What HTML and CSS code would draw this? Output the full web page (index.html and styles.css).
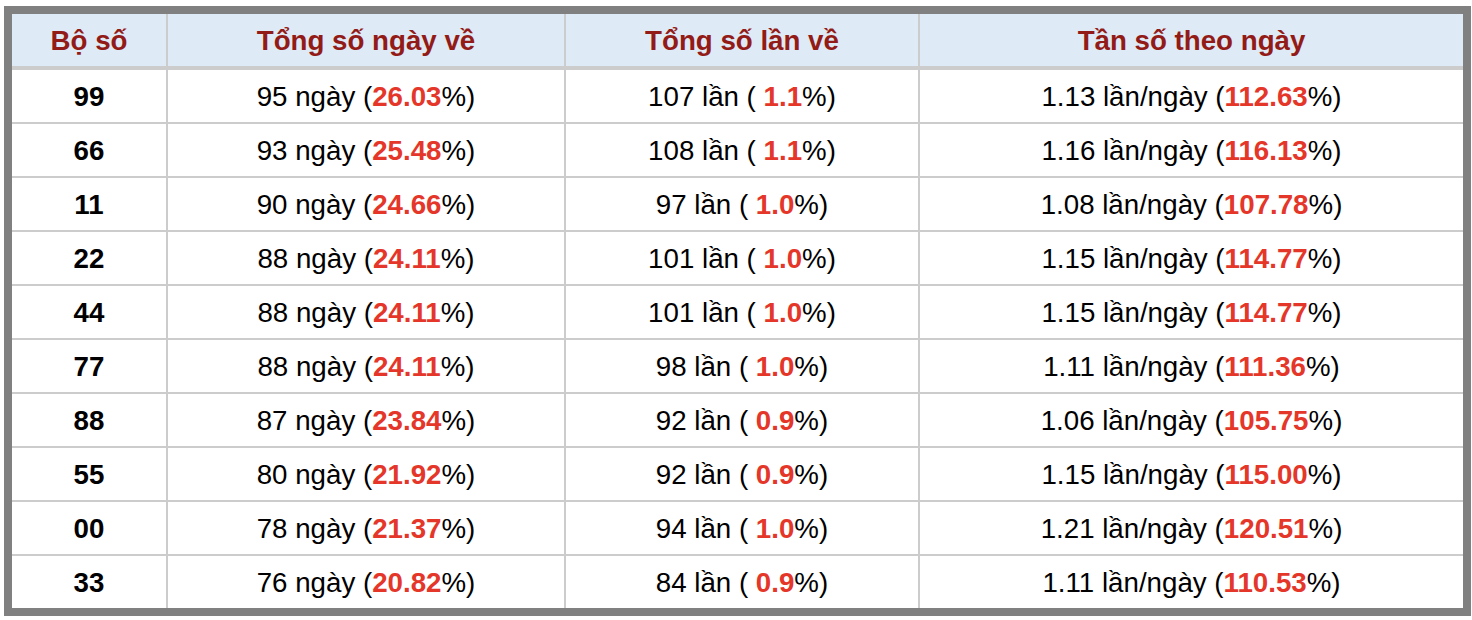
FILE: index.html
```html
<!DOCTYPE html>
<html lang="vi">
<head>
<meta charset="utf-8">
<title>Thống kê bộ số</title>
<link rel="stylesheet" href="styles.css">
</head>
<body>
<div class="frame">
<table class="stats">
<colgroup>
<col class="c1"><col class="c2"><col class="c3"><col class="c4">
</colgroup>
<thead>
<tr><th>Bộ số</th><th>Tổng số ngày về</th><th>Tổng số lần về</th><th>Tần số theo ngày</th></tr>
</thead>
<tbody>
<tr><td class="num">99</td><td>95 ngày (<b class="hl">26.03</b>%)</td><td>107 lần ( <b class="hl">1.1</b>%)</td><td>1.13 lần/ngày (<b class="hl">112.63</b>%)</td></tr>
<tr><td class="num">66</td><td>93 ngày (<b class="hl">25.48</b>%)</td><td>108 lần ( <b class="hl">1.1</b>%)</td><td>1.16 lần/ngày (<b class="hl">116.13</b>%)</td></tr>
<tr><td class="num">11</td><td>90 ngày (<b class="hl">24.66</b>%)</td><td>97 lần ( <b class="hl">1.0</b>%)</td><td>1.08 lần/ngày (<b class="hl">107.78</b>%)</td></tr>
<tr><td class="num">22</td><td>88 ngày (<b class="hl">24.11</b>%)</td><td>101 lần ( <b class="hl">1.0</b>%)</td><td>1.15 lần/ngày (<b class="hl">114.77</b>%)</td></tr>
<tr><td class="num">44</td><td>88 ngày (<b class="hl">24.11</b>%)</td><td>101 lần ( <b class="hl">1.0</b>%)</td><td>1.15 lần/ngày (<b class="hl">114.77</b>%)</td></tr>
<tr><td class="num">77</td><td>88 ngày (<b class="hl">24.11</b>%)</td><td>98 lần ( <b class="hl">1.0</b>%)</td><td>1.11 lần/ngày (<b class="hl">111.36</b>%)</td></tr>
<tr><td class="num">88</td><td>87 ngày (<b class="hl">23.84</b>%)</td><td>92 lần ( <b class="hl">0.9</b>%)</td><td>1.06 lần/ngày (<b class="hl">105.75</b>%)</td></tr>
<tr><td class="num">55</td><td>80 ngày (<b class="hl">21.92</b>%)</td><td>92 lần ( <b class="hl">0.9</b>%)</td><td>1.15 lần/ngày (<b class="hl">115.00</b>%)</td></tr>
<tr><td class="num">00</td><td>78 ngày (<b class="hl">21.37</b>%)</td><td>94 lần ( <b class="hl">1.0</b>%)</td><td>1.21 lần/ngày (<b class="hl">120.51</b>%)</td></tr>
<tr><td class="num">33</td><td>76 ngày (<b class="hl">20.82</b>%)</td><td>84 lần ( <b class="hl">0.9</b>%)</td><td>1.11 lần/ngày (<b class="hl">110.53</b>%)</td></tr>
</tbody>
</table>
</div>
</body>
</html>
```

FILE: styles.css
```css
html, body {
  margin: 0;
  padding: 0;
  background: #ffffff;
}

body {
  font-family: "Liberation Sans", Arial, Helvetica, sans-serif;
  font-size: 27.7px;
  color: #000000;
}

.frame {
  box-sizing: border-box;
  width: 1467px;
  height: 610px;
  margin: 6px 0 0 4px;
  border: 8px solid #808080;
  background: #ffffff;
}

.stats {
  width: 1451px;
  border-collapse: collapse;
  table-layout: fixed;
}

.c1 { width: 155px; }
.c2 { width: 398px; }
.c3 { width: 354px; }
.c4 { width: 544px; }

.stats th,
.stats td {
  padding: 2px 0 0 0;
  height: 50px;
  line-height: 50px;
  text-align: center;
  vertical-align: middle;
  border: 2px solid #cccccc;
  white-space: nowrap;
}

.stats th {
  background: #deeaf5;
  color: #931b17;
  font-weight: bold;
  border-top: none;
  border-bottom: 4px solid #cccccc;
}

.stats tr > :first-child { border-left: none; }
.stats tr > :last-child { border-right: none; }
.stats tbody tr:last-child td { border-bottom: none; }

.stats .num {
  font-weight: bold;
}

.hl {
  color: #e5362a;
  font-weight: bold;
}
```
